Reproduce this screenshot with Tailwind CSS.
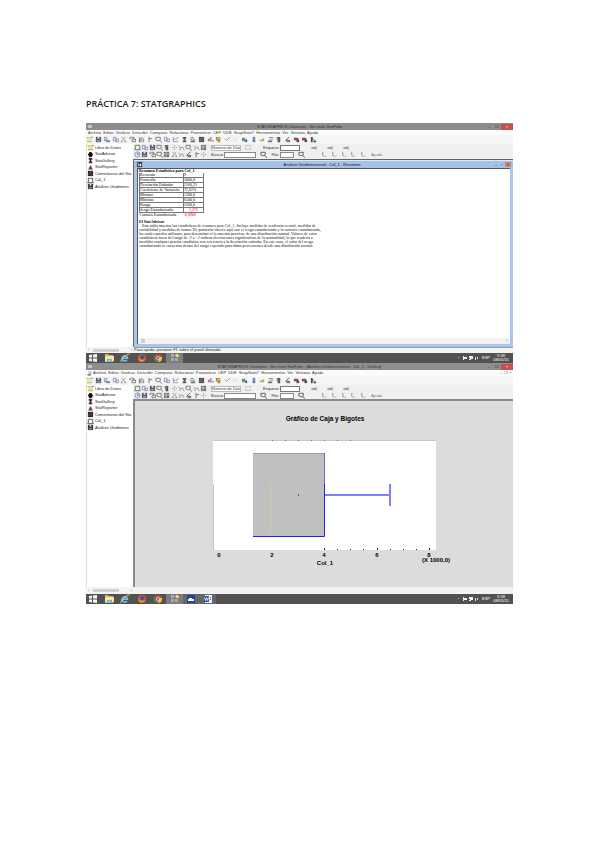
<!DOCTYPE html>
<html lang="es">

<head>
    <meta charset="UTF-8" />
    <meta name="viewport" content="width=device-width, initial-scale=1.0" />
    <title>Práctica 7: Statgraphics</title>
    <script src="https://cdn.jsdelivr.net/npm/@tailwindcss/browser@4"></script>
</head>

<body class="bg-white min-h-screen px-[86px] pt-24 font-['Liberation_Sans',sans-serif] text-black">

    <!-- Icons -->
    <svg class="hidden" aria-hidden="true">
        <symbol id="open" viewBox="0 0 8 8"><path fill="#e9e39a" d="M1 2h6v5H1z"/><path fill="#b5ae5c" d="M0 1h4v1H0zM1 6h6v1H1z"/><path fill="#777" d="M5 1h3v1H5z"/></symbol>
        <symbol id="save" viewBox="0 0 8 8"><path fill="#334" d="M1 1h6v6H1z"/><path fill="#dde" d="M3 1h2v2H3zM2 5h4v1H2z"/></symbol>
        <symbol id="copy" viewBox="0 0 8 8"><path fill="#6d8fc4" d="M1 1h4v5H1z"/><path fill="#dbe6f7" d="M2 2h2v2H2z"/><path fill="#4a5f82" d="M4 5h4v2H4z"/></symbol>
        <symbol id="pages" viewBox="0 0 8 8"><path fill="none" stroke="#667da0" d="M1.500 1.500h3v4h-3zM4.500 3.500h3v3h-3z"/></symbol>
        <symbol id="cut" viewBox="0 0 8 8"><path fill="none" stroke="#888" d="M2 1l3 4M6 1L3 5"/><path fill="#888" d="M1 5h2v2H1zM5 5h2v2H5z"/></symbol>
        <symbol id="paste" viewBox="0 0 8 8"><path fill="none" stroke="#555" d="M1.500 1.500h4v3M3.500 3.500h4v3h-4z"/><path fill="#555" d="M0 2h2v1H0z"/></symbol>
        <symbol id="bars" viewBox="0 0 8 8"><path fill="#5d6676" d="M1 2h2v5H1zM4 1h1v6H4zM6 3h1v4H6z"/><path fill="#8fa3c9" d="M1 2h5v1H1z"/></symbol>
        <symbol id="undo" viewBox="0 0 8 8"><path fill="none" stroke="#444" d="M3.500 1v6M4 3h3"/></symbol>
        <symbol id="find" viewBox="0 0 8 8"><path fill="none" stroke="#555" d="M1 1.500h5v3l-2 1-3-1zM5 5l3 2.500"/></symbol>
        <symbol id="line" viewBox="0 0 8 8"><path fill="none" stroke="#7a7a99" d="M1.500 1v5.500H7M2 5l2-2 1 1 2-3"/></symbol>
        <symbol id="pillar" viewBox="0 0 8 8"><path fill="#333" d="M2 1h4v2H2zM3 3h2v2H3zM2 5h4v2H2z"/></symbol>
        <symbol id="rows" viewBox="0 0 8 8"><path fill="#355" d="M2 1h3v1H2zM1 3h6v1H1zM2 5h5v2H2z"/></symbol>
        <symbol id="film" viewBox="0 0 8 8"><path fill="#322" d="M1 1h6v6H1z"/><path fill="#b9a7a7" d="M4 2h1v1H4zM2 4h1v1H2zM5 5h1v1H5z"/></symbol>
        <symbol id="sheetwin" viewBox="0 0 8 8"><path fill="#333" d="M1 1h6v6H1z"/><path fill="#e4ecf6" d="M2 2h1v4H2zM4 3h2v3H4z"/></symbol>
        <symbol id="tick" viewBox="0 0 8 8"><path fill="#c55" d="M1 3h3v3H1z"/><path fill="#234" d="M4 1h1v3H4zM4 5h4v1H4z"/></symbol>
        <symbol id="gear" viewBox="0 0 8 8"><path fill="#986f1c" d="M1 1h5v4H1zM3 5h3v2H3z"/><path fill="#e8c46a" d="M3 2h2v2H3z"/></symbol>
        <symbol id="slash" viewBox="0 0 8 8"><path fill="none" stroke="#77b" d="M1 3l2 2 4-4"/></symbol>
        <symbol id="dim" viewBox="0 0 8 8"><path fill="none" stroke="#ddd" d="M1.500 2.500h4v3h-4z"/></symbol>
        <symbol id="teal" viewBox="0 0 8 8"><path fill="#49788c" d="M1 2h4v4H1z"/><path fill="#225" d="M5 4h2v3H5z"/></symbol>
        <symbol id="blue" viewBox="0 0 8 8"><path fill="#345c9c" d="M3 1h3v6H3z"/><path fill="#9bb6df" d="M4 2h1v2H4z"/></symbol>
        <symbol id="gold" viewBox="0 0 8 8"><path fill="#bb9a30" d="M2 4h5v2H2z"/><path fill="#654" d="M5 3h2v1H5z"/></symbol>
        <symbol id="sheet" viewBox="0 0 8 8"><path fill="#556" d="M2 1h5v1H2zM3 3h4v1H3zM1 5h5v2H1z"/></symbol>
        <symbol id="bulb" viewBox="0 0 8 8"><path fill="#333" d="M2 1h4v3H2zM3 4h3v3H3z"/><path fill="#ccc" d="M3 2h1v1H3z"/></symbol>
        <symbol id="sigma" viewBox="0 0 8 8"><path fill="none" stroke="#222" d="M6 1L2 5h5M3 6.500h4"/></symbol>
        <symbol id="red" viewBox="0 0 8 8"><path fill="#8b1a2b" d="M1 2h5v3H1z"/><path fill="#222" d="M4 4h3v3H4z"/></symbol>
        <symbol id="chart" viewBox="0 0 8 8"><path fill="#222" d="M1 1h2v6H1zM3 3h2v1H3zM4 5h3v2H4z"/></symbol>
        <symbol id="box" viewBox="0 0 8 8"><path fill="none" stroke="#444" d="M1.500 1.500h5v5h-5z"/><path fill="#777" d="M0 6h8v1H0z"/></symbol>
        <symbol id="plus" viewBox="0 0 8 8"><path fill="none" stroke="#888" d="M4 1v2M4 5v2M1 4h2M5 4h2"/></symbol>
        <symbol id="zig" viewBox="0 0 8 8"><path fill="none" stroke="#777" d="M1 2l2 3 2-2 2 4M1 6h2"/></symbol>
        <symbol id="corner" viewBox="0 0 8 8"><path fill="none" stroke="#888" d="M2 1v4l2 1M5 6h1"/></symbol>
        <symbol id="grid" viewBox="0 0 8 8"><path fill="#555" d="M1 1h6v6H1z"/><path stroke="#bbb" d="M1 3.500h6M3.500 1v6"/></symbol>
        <symbol id="clock" viewBox="0 0 8 8"><circle cx="4" cy="4" r="3" fill="#dde6f7" stroke="#5a78c4"/><path stroke="#5a78c4" d="M4 2v2h2"/></symbol>
        <symbol id="dot" viewBox="0 0 8 8"><path fill="#111" d="M3 1h2l2 3-2 3H3L1 4z"/></symbol>
        <symbol id="man" viewBox="0 0 8 8"><path fill="#446" d="M3 2h2v2h1v2H2V4h1z"/><path fill="#9a8fc0" d="M1 6h6v1H1z"/></symbol>
        <symbol id="folder" viewBox="0 0 12 10"><path fill="#d8b55a" d="M2 1h3l1 1h4v7H2z"/><path fill="#f6e6a4" d="M2 3h9v5H2z"/><path fill="#6db3dd" d="M4 6h5v3H7V7H6v2H4z"/></symbol>
        <symbol id="ie" viewBox="0 0 12 10"><path fill="none" stroke="#6fc3ee" stroke-width="1.500" d="M3.500 5.200h5A2.700 2.700 0 1 0 8 7"/><path fill="none" stroke="#e4cf6a" d="M2 9C1 7 7 1 10.500 1"/></symbol>
        <symbol id="firefox" viewBox="0 0 12 10"><circle cx="6" cy="5" r="4" fill="#e2591b"/><circle cx="6.500" cy="4" r="2.300" fill="#2f5ea8"/><path fill="#f2a02c" d="M2 4c1 3 4 4 7 2-1 3-6 4-7-2z"/></symbol>
        <symbol id="chrome" viewBox="0 0 12 10"><circle cx="6" cy="5" r="4" fill="#d8432f"/><path fill="#3d9b4a" d="M2.300 3.500L6 9a4 4 0 0 1-3.700-5.500z"/><path fill="#f0c935" d="M6 9l2-5h2a4 4 0 0 1-4 5z"/><circle cx="6" cy="5" r="1.800" fill="#fff"/><circle cx="6" cy="5" r="1.300" fill="#4a86d8"/></symbol>
        <symbol id="stat" viewBox="0 0 12 10"><path fill="#aaa" d="M2 1h3v3H2zM2 5h3v3H2zM6 5h3v3H6z"/><path fill="#ecd873" d="M7 1h2v1h1v2H7V3H6V2h1z"/></symbol>
        <symbol id="cloud" viewBox="0 0 12 10"><path fill="#17489b" d="M2 1h8v8H2z"/><path fill="#fff" d="M3 6V5h1V4h3v1h2v2H3z"/></symbol>
        <symbol id="word" viewBox="0 0 12 10"><path fill="#f4f7fc" d="M3 1h7v8H3z"/><path fill="#2b5797" d="M2 2h5v6H2zM8 3h1v1H8zM8 5h1v1H8z"/><path fill="none" stroke="#fff" stroke-width=".8" d="M2.500 3.500l1 3 1-3 1 3 1-3"/></symbol>
        <symbol id="windows" viewBox="0 0 12 10"><path fill="#f5f5f5" d="M2 2l3-.5V4.500H2zM6 1.400L10 1v3.500H6zM2 5.500h3v3L2 8zM6 5.500h4V9l-4-.4z"/></symbol>
        <symbol id="tray" viewBox="0 0 20 8"><path fill="#bbb" d="M0 3h1v1H0z"/><path fill="#eee" d="M5 2h1v4H5zM6 3h3v2H6zM11 2h4v3h-2v1h-2V5h1V4h-1z"/><path fill="#ddd" d="M17 3h1v3h-1zM19 3h1v2h-1z"/></symbol>
    </svg>

    <!-- Parts shared by both windows -->
    <template id="menu-template">
        <nav class="flex items-center gap-[2px]">
            <a href="#">Archivo</a><a href="#">Editar</a><a href="#">Graficar</a><a href="#">Describir</a><a href="#">Comparar</a><a href="#">Relacionar</a><a href="#">Pronosticar</a><a href="#">CEP</a><a href="#">DDE</a><a href="#">SnapStats!!</a><a href="#">Herramientas</a><a href="#">Ver</a><a href="#">Ventana</a><a href="#">Ayuda</a>
        </nav>
    </template>

    <template id="bars-template">
        <div class="flex w-[231px] justify-between opacity-80" data-icons="open save copy pages cut paste bars undo find pages line pillar rows film tick gear slash dim teal blue gold sheet bulb sigma red red chart"></div>
    </template>

    <template id="tools-template">
        <div class="flex h-[7px] items-center gap-1 whitespace-nowrap">
            <div class="flex w-[73px] justify-between opacity-80" data-icons="box pages save find bulb plus zig find zig grid"></div>
            <select aria-label="Numero de Datos" class="h-[6px] w-[30px] appearance-none border border-[#bbb] bg-white p-0 text-[4px] leading-[4px]"><option>Numero de Datos</option></select>
            <button class="h-[5px] w-[6px] border border-[#ccc]" aria-label="Aplicar"></button>
            <label class="ml-2 flex items-center gap-px">Etiquetar<input class="h-[6px] w-5 border border-[#777] bg-white p-0 text-[4px]" /></label>
            <button class="ml-1 w-3">ab|</button><button class="w-3">ab|</button><button class="w-3">ab|</button>
        </div>
        <div class="flex h-[7px] items-center gap-1 whitespace-nowrap">
            <div class="flex w-[73px] justify-between opacity-80" data-icons="clock save paste find grid cut zig sigma undo plus"></div>
            <label class="flex items-center gap-px">Buscar<input class="h-[6px] w-8 border border-[#888] bg-white p-0 text-[4px]" /></label>
            <button aria-label="Buscar siguiente"><svg class="size-[7px]"><use href="#find"/></svg></button>
            <label class="flex items-center gap-px">Fila:<input class="h-[6px] w-[14px] border border-[#888] bg-white p-0 text-[4px]" /></label>
            <button aria-label="Ir a fila"><svg class="size-[7px]"><use href="#find"/></svg></button>
            <div class="ml-3 flex w-[46px] justify-between" data-icons="corner corner corner corner corner"></div>
            <button class="text-[#777]">Ayuda</button>
        </div>
    </template>

    <template id="side-template">
        <ul class="flex flex-col gap-[2px] text-[4px] leading-[4px] text-[#222]">
            <li class="flex h-[5px] items-center gap-px"><svg class="size-[7px] shrink-0"><use href="#open"/></svg>Libro de Datos</li>
            <li class="flex h-[4px] items-center gap-px"><svg class="size-[7px] shrink-0"><use href="#dot"/></svg>StatAdvisor</li>
            <li class="flex h-[5px] items-center gap-px"><svg class="size-[7px] shrink-0"><use href="#pillar"/></svg>StatGallery</li>
            <li class="flex h-[4px] items-center gap-px"><svg class="size-[7px] shrink-0"><use href="#man"/></svg>StatReporter</li>
            <li class="flex h-[5px] items-center gap-px"><svg class="size-[7px] shrink-0"><use href="#film"/></svg>Comentarios del Sta</li>
            <li class="flex h-[4px] items-center gap-px"><svg class="size-[7px] shrink-0"><use href="#box"/></svg>Col_1</li>
            <li class="flex h-[5px] items-center gap-px"><svg class="size-[7px] shrink-0"><use href="#save"/></svg>Análisis Unidimens</li>
        </ul>
    </template>

    <h1 class="font-['Open_Sans',sans-serif] text-[9px] leading-4 font-semibold text-[#222]">PRÁCTICA 7: STATGRAPHICS</h1>

    <!-- Window 1: summary statistics -->
    <section class="mt-[11px] whitespace-nowrap">
        <header class="flex h-[7px] items-center bg-[#8e8e8e] text-[4px] leading-[4px] text-[#333]">
            <span class="mr-[22px] ml-[2px] h-[3px] w-1 bg-[#c5c5c5]"></span>
            <span class="flex-1 text-center">STATGRAPHICS Centurion - Sin título StatFolio</span>
            <button class="w-2" aria-label="Minimizar">–</button><button class="w-2" aria-label="Restaurar">❐</button>
            <button class="h-[6px] w-3 bg-[#c8504f] text-white" aria-label="Cerrar">×</button>
        </header>
        <div class="flex h-[5px] items-center bg-[#fbfbfb] pl-[2px] text-[4px] leading-[4px] text-[#333]" data-part="menu-template"></div>
        <div class="flex h-[9px] items-center bg-[#f5f5f5]" data-part="bars-template"></div>
        <div class="flex bg-[#f0f0f0]">
            <aside class="w-[47px] shrink-0 overflow-hidden border-l border-[#ddd] bg-white pt-px" data-part="side-template"></aside>
            <div class="min-w-0 flex-1">
                <div class="pl-px text-[4px] leading-[4px] text-[#333]" data-part="tools-template"></div>
                <div class="mt-px border-t border-l border-[#666] bg-[#a9c7ec]">
                    <header class="flex h-2 items-center border-t border-[#dbe8f7] bg-[#a5c1e4] px-[2px] text-[4px] leading-[4px] text-[#111]">
                        <svg class="mr-2 size-[7px]"><use href="#sheetwin"/></svg>
                        <span class="flex-1 text-center">Análisis Unidimensional - Col_1 - Resumen</span>
                        <button class="w-[6px]" aria-label="Minimizar">–</button><button class="w-[6px]" aria-label="Maximizar">▫</button><button class="h-[5px] w-[6px] bg-[#c78676]" aria-label="Cerrar">×</button>
                    </header>
                    <div class="mr-[3px] ml-[3px] border-t border-l border-[#555] bg-white font-['Liberation_Serif',serif] text-[4px] leading-[4px]">
                        <div class="h-[169px] pl-px">
                            <table class="w-[65px] border-collapse text-left">
                                <caption class="text-left leading-[4px] font-bold">Resumen Estadístico para Col_1</caption>
                                <tbody class="leading-[4px]">
                                    <tr class="border-x border-[#777]"><td class="p-0">Recuento</td><td class="w-5 border-l border-[#777] p-0">9</td></tr>
                                    <tr class="border border-[#777]"><td class="p-0">Promedio</td><td class="border-l border-[#777] p-0">3000,0</td></tr>
                                    <tr class="border-x border-[#777]"><td class="p-0">Desviación Estándar</td><td class="border-l border-[#777] p-0">2160,25</td></tr>
                                    <tr class="border border-[#777]"><td class="p-0">Coeficiente de Variación</td><td class="border-l border-[#777] p-0">72,01%</td></tr>
                                    <tr class="border-x border-[#777]"><td class="p-0">Mínimo</td><td class="border-l border-[#777] p-0">1300,0</td></tr>
                                    <tr class="border border-[#777]"><td class="p-0">Máximo</td><td class="border-l border-[#777] p-0">6500,0</td></tr>
                                    <tr class="border-x border-[#777]"><td class="p-0">Rango</td><td class="border-l border-[#777] p-0">5200,0</td></tr>
                                    <tr class="border border-[#777]"><td class="p-0">Sesgo Estandarizado</td><td class="border-l border-[#777] p-0 text-center text-red-600">1,275</td></tr>
                                    <tr><td class="p-0">Curtosis Estandarizada</td><td class="p-0 text-red-600">-0,0908</td></tr>
                                </tbody>
                            </table>
                            <h2 class="mt-[3px] font-bold">El StatAdvisor</h2>
                            <p class="w-[184px] indent-[3px] whitespace-normal text-[#111]">Esta tabla muestra los estadísticos de resumen para Col_1. Incluye medidas de tendencia central, medidas de variabilidad y medidas de forma. De particular interés aquí son el sesgo estandarizado y la curtosis estandarizada, las cuales pueden utilizarse para determinar si la muestra proviene de una distribución normal. Valores de estos estadísticos fuera del rango de -2 a +2 indican desviaciones significativas de la normalidad, lo que tendería a invalidar cualquier prueba estadística con referencia a la desviación estándar. En este caso, el valor del sesgo estandarizado se encuentra dentro del rango esperado para datos provenientes desde una distribución normal.</p>
                        </div>
                        <div class="flex h-[6px] items-center bg-[#f2f2f2] px-[3px] font-['Liberation_Sans',sans-serif] text-[#555]"><span class="h-1 w-1 bg-[#cfcfcf]"></span><span class="ml-auto">›</span></div>
                    </div>
                    <div class="h-[3px]"></div>
                </div>
            </div>
        </div>
        <footer class="flex h-[6px] items-center bg-[#f3f3f3] text-[4px] leading-[4px] text-[#222]">
            <div class="flex w-12 items-center justify-between px-[2px] text-[#777]"><span>‹</span><span class="mr-2 h-[3px] w-[26px] bg-[#cfcfcf]"></span><span>›</span></div>
            <span class="h-full flex-1 border-t border-[#999]">Para ayuda, presione F1 sobre el panel deseado</span>
        </footer>
        <div class="flex h-[10px] items-center bg-[#525252] text-[4px] leading-[4px] text-white">
            <button class="w-[14px]" aria-label="Inicio"><svg class="mx-auto h-[10px] w-3"><use href="#windows"/></svg></button>
            <button class="w-[17px]" aria-label="Explorador"><svg class="mx-auto h-[10px] w-3"><use href="#folder"/></svg></button>
            <button class="w-[16px]" aria-label="Internet Explorer"><svg class="mx-auto h-[10px] w-3"><use href="#ie"/></svg></button>
            <button class="w-[17px]" aria-label="Firefox"><svg class="mx-auto h-[10px] w-3"><use href="#firefox"/></svg></button>
            <button class="w-[16px]" aria-label="Chrome"><svg class="mx-auto h-[10px] w-3"><use href="#chrome"/></svg></button>
            <button class="w-[17px] bg-[#7d7d7d]" aria-label="Statgraphics"><svg class="mx-auto h-[10px] w-3"><use href="#stat"/></svg></button>
            <svg class="ml-auto h-2 w-5"><use href="#tray"/></svg>
            <span class="ml-1 text-center">ESP</span>
            <span class="mr-px w-[22px] text-center">9:58<br>08/05/15</span>
        </div>
    </section>

    <!-- Window 2: box plot -->
    <section class="whitespace-nowrap">
        <header class="flex h-[7px] items-center bg-[#8e8e8e] text-[4px] leading-[4px] text-[#333]">
            <span class="mr-[22px] ml-[2px] h-[3px] w-1 bg-[#c5c5c5]"></span>
            <span class="flex-1 text-center">STATGRAPHICS Centurion - Sin título StatFolio - [Análisis Unidimensional - Col_1 - Gráfico]</span>
            <button class="w-2" aria-label="Minimizar">–</button><button class="w-2" aria-label="Restaurar">❐</button>
            <button class="h-[6px] w-3 bg-[#c8504f] text-white" aria-label="Cerrar">×</button>
        </header>
        <div class="flex h-[6px] items-center bg-[#fbfbfb] pl-px text-[4px] leading-[4px] text-[#333]">
            <svg class="mr-px size-[5px]"><use href="#sheet"/></svg>
            <div data-part="menu-template"></div>
            <button class="ml-auto w-[5px] text-[#4a78a8]" aria-label="Minimizar gráfico">–</button><button class="w-[5px] text-[#4a78a8]" aria-label="Restaurar gráfico">❐</button><button class="w-[5px] text-[#4a78a8]" aria-label="Cerrar gráfico">×</button>
        </div>
        <div class="flex h-[9px] items-center bg-[#f5f5f5]" data-part="bars-template"></div>
        <div class="flex bg-[#f0f0f0]">
            <aside class="w-[47px] shrink-0 overflow-hidden border-l border-[#ddd] bg-white pt-px" data-part="side-template"></aside>
            <div class="min-w-0 flex-1">
                <div class="pl-px text-[4px] leading-[4px] text-[#333]" data-part="tools-template"></div>
                <div class="border-t-2 border-l-2 border-[#8a8a8a] bg-[#dcdcdc]">
                    <svg class="block w-full font-bold" viewBox="135 401 378 186" role="img" aria-label="Gráfico de Caja y Bigotes">
                        <text x="325" y="421" font-size="6.500" text-anchor="middle">Gráfico de Caja y Bigotes</text>
                        <path fill="#fff" d="M213 440h223v110H213z"/>
                        <path fill="none" stroke="#c8c8c8" d="M213.500 484v66M213 440.500h223"/>
                        <path stroke="#777" d="M272.500 440v1M285.500 440v1M298.500 440v1M311.500 440v1M324.500 440v1M337.500 440v1M350.500 440v1"/>
                        <path stroke="#222" d="M324.500 548v2M337.500 549v1M350.500 549v1M363.500 549v1M377.500 548v2M390.500 549v1M403.500 549v1M416.500 549v1M429.500 548v2"/>
                        <path fill="#c0c0c0" d="M253 453h72v83H253z"/>
                        <path stroke="#9c9ca8" d="M253 453.500h72"/>
                        <path stroke="#6a6ab8" d="M324.500 453v31"/>
                        <path stroke="#d0cea8" d="M270.500 484v51"/>
                        <path stroke="#a04a3a" d="M298.500 494v2"/>
                        <path fill="none" stroke="#2222f0" d="M253 536.500h71.500V484"/>
                        <path stroke="#8080ff" stroke-width="2" d="M325 495h65M390 484v22"/>
                        <g font-size="6" text-anchor="middle">
                            <text x="219" y="557">0</text>
                            <text x="272" y="557">2</text>
                            <text x="324" y="557">4</text>
                            <text x="377" y="557">6</text>
                            <text x="429" y="557">8</text>
                            <text x="325" y="565">Col_1</text>
                            <text x="436" y="562">(X 1000,0)</text>
                        </g>
                    </svg>
                </div>
            </div>
        </div>
        <footer class="flex h-[7px] items-center bg-[#f3f3f3] text-[4px] leading-[4px] text-[#777]">
            <div class="flex w-12 items-center justify-between px-[2px]"><span>‹</span><span class="mr-2 h-[3px] w-[26px] bg-[#cfcfcf]"></span><span>›</span></div>
        </footer>
        <div class="flex h-[10px] items-center bg-[#525252] text-[4px] leading-[4px] text-white">
            <button class="w-[14px]" aria-label="Inicio"><svg class="mx-auto h-[10px] w-3"><use href="#windows"/></svg></button>
            <button class="w-[17px]" aria-label="Explorador"><svg class="mx-auto h-[10px] w-3"><use href="#folder"/></svg></button>
            <button class="w-[16px]" aria-label="Internet Explorer"><svg class="mx-auto h-[10px] w-3"><use href="#ie"/></svg></button>
            <button class="w-[17px]" aria-label="Firefox"><svg class="mx-auto h-[10px] w-3"><use href="#firefox"/></svg></button>
            <button class="w-[16px]" aria-label="Chrome"><svg class="mx-auto h-[10px] w-3"><use href="#chrome"/></svg></button>
            <button class="w-[17px] bg-[#7d7d7d]" aria-label="Statgraphics"><svg class="mx-auto h-[10px] w-3"><use href="#stat"/></svg></button>
            <button class="w-[16px] bg-[#666666]" aria-label="OneDrive"><svg class="mx-auto h-[10px] w-3"><use href="#cloud"/></svg></button>
            <button class="w-[17px] bg-[#666666]" aria-label="Word"><svg class="mx-auto h-[10px] w-3"><use href="#word"/></svg></button>
            <svg class="ml-auto h-2 w-5"><use href="#tray"/></svg>
            <span class="ml-1 text-center">ESP</span>
            <span class="mr-px w-[22px] text-center">9:58<br>08/05/15</span>
        </div>
    </section>

    <script>
        document.querySelectorAll('[data-part]').forEach(function (el) {
            el.appendChild(document.getElementById(el.dataset.part).content.cloneNode(true));
        });
        document.querySelectorAll('[data-icons]').forEach(function (el) {
            el.innerHTML = el.dataset.icons.split(' ').map(function (name) {
                return '<button aria-label="' + name + '"><svg class="size-[7px]"><use href="#' + name + '"/></svg></button>';
            }).join('');
        });
    </script>
</body>

</html>
